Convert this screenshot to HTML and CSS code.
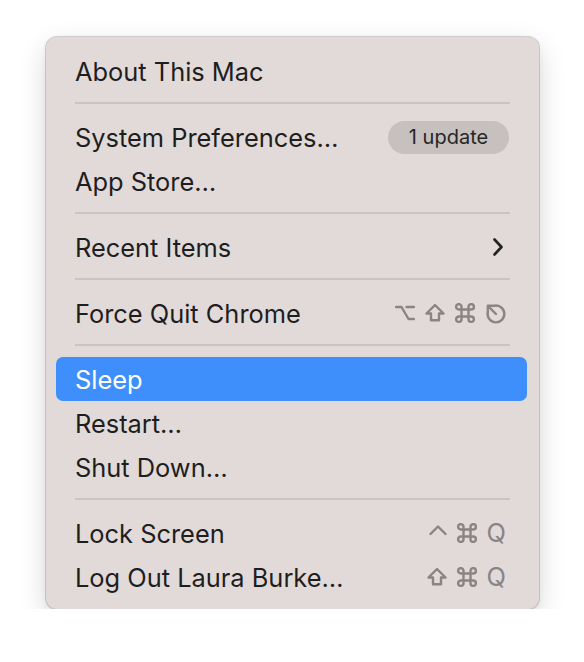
FILE: index.html
```html
<!DOCTYPE html>
<html>
<head>
<meta charset="utf-8">
<link rel="stylesheet" href="styles.css">
</head>
<body>
<div class="menu">
  <div class="item"><span class="label">About This Mac</span></div>
  <div class="sep"></div>
  <div class="item"><span class="label">System Preferences…</span><span class="badge">1 update</span></div>
  <div class="item"><span class="label">App Store…</span></div>
  <div class="sep"></div>
  <div class="item"><span class="label">Recent Items</span>
    <svg class="chev" width="12" height="20" viewBox="0 0 12 20"><path d="M2.5 2.5 L9.5 10 L2.5 17.5" fill="none" stroke="#222" stroke-width="2.6" stroke-linecap="round" stroke-linejoin="round"/></svg>
  </div>
  <div class="sep"></div>
  <div class="item"><span class="label">Force Quit Chrome</span>
    <span class="keys">
      <svg class="key" width="20" height="20" viewBox="0 0 20 20"><path d="M1 4 H6.5 L13.5 16 H19 M11.5 4 H19"/></svg>
      <svg class="key" width="20" height="20" viewBox="0 0 20 20"><path d="M10 2 L18.5 10.5 H14 V17.2 H6 V10.5 H1.5 Z"/></svg>
      <svg class="key" width="20" height="20" viewBox="0 0 20 20"><path d="M6.5 6.5 V3.8 A2.7 2.7 0 1 0 3.8 6.5 H16.2 A2.7 2.7 0 1 0 13.5 3.8 V16.2 A2.7 2.7 0 1 0 16.2 13.5 H3.8 A2.7 2.7 0 1 0 6.5 16.2 Z"/></svg>
      <svg class="key" width="21" height="21" viewBox="0 0 21 21"><path d="M8.6 2.9 A8.4 8.4 0 1 1 2.9 8.6 M11 11 L2.8 2.8 M2.8 2.8 V8 M2.8 2.8 H8"/></svg>
    </span>
  </div>
  <div class="sep"></div>
  <div class="item active"><span class="label">Sleep</span></div>
  <div class="item"><span class="label">Restart…</span></div>
  <div class="item"><span class="label">Shut Down…</span></div>
  <div class="sep"></div>
  <div class="item"><span class="label">Lock Screen</span>
    <span class="keys">
      <svg class="key" width="18" height="20" viewBox="0 0 18 20"><path d="M1.5 11 L9 3.5 L16.5 11"/></svg>
      <svg class="key" width="20" height="20" viewBox="0 0 20 20"><path d="M6.5 6.5 V3.8 A2.7 2.7 0 1 0 3.8 6.5 H16.2 A2.7 2.7 0 1 0 13.5 3.8 V16.2 A2.7 2.7 0 1 0 16.2 13.5 H3.8 A2.7 2.7 0 1 0 6.5 16.2 Z"/></svg>
      <span class="q">Q</span>
    </span>
  </div>
  <div class="item"><span class="label">Log Out Laura Burke…</span>
    <span class="keys">
      <svg class="key" width="20" height="20" viewBox="0 0 20 20"><path d="M10 2 L18.5 10.5 H14 V17.2 H6 V10.5 H1.5 Z"/></svg>
      <svg class="key" width="20" height="20" viewBox="0 0 20 20"><path d="M6.5 6.5 V3.8 A2.7 2.7 0 1 0 3.8 6.5 H16.2 A2.7 2.7 0 1 0 13.5 3.8 V16.2 A2.7 2.7 0 1 0 16.2 13.5 H3.8 A2.7 2.7 0 1 0 6.5 16.2 Z"/></svg>
      <span class="q">Q</span>
    </span>
  </div>
</div>
</body>
</html>
```
FILE: styles.css
```css
html, body {
  margin: 0;
  padding: 0;
  background: #ffffff;
}
body {
  padding: 37px 0 0 46px;
  font-family: Inter, "Noto Sans", "Liberation Sans", sans-serif;
}
.menu {
  width: 493px;
  box-sizing: border-box;
  padding: 12px 12px 10px 10px;
  background: #e2dad9;
  border-radius: 11px;
  box-shadow: 0 0 0 1px rgba(0, 0, 0, 0.16), 0 10px 28px rgba(0, 0, 0, 0.16), 0 2px 6px rgba(0, 0, 0, 0.06);
}
.item {
  height: 44px;
  display: flex;
  align-items: center;
  justify-content: space-between;
  padding: 0 20px 0 19px;
  border-radius: 7px;
  color: #1e1e1e;
  font-size: 25.4px;
}
.item.active {
  background: #3e8ffb;
  color: #ffffff;
}
.sep {
  height: 2px;
  margin: 9px 17px 11px 19px;
  background: #cac3c2;
}
.badge {
  margin-right: -2px;
  width: 121px;
  text-align: center;
  height: 33px;
  line-height: 33px;
  border-radius: 17px;
  background: #c6c0bf;
  font-size: 20px;
  color: #262626;
}
.chev {
  margin-right: 3px;
}
.keys {
  display: flex;
  align-items: center;
  gap: 10px;
  margin-right: 1px;
}
.key {
  display: block;
}
.key path {
  fill: none;
  stroke: #8a8484;
  stroke-width: 2.4;
  stroke-linejoin: round;
  stroke-linecap: round;
}
.q {
  font-size: 25.4px;
  color: #8a8484;
  line-height: 1;
}
```
